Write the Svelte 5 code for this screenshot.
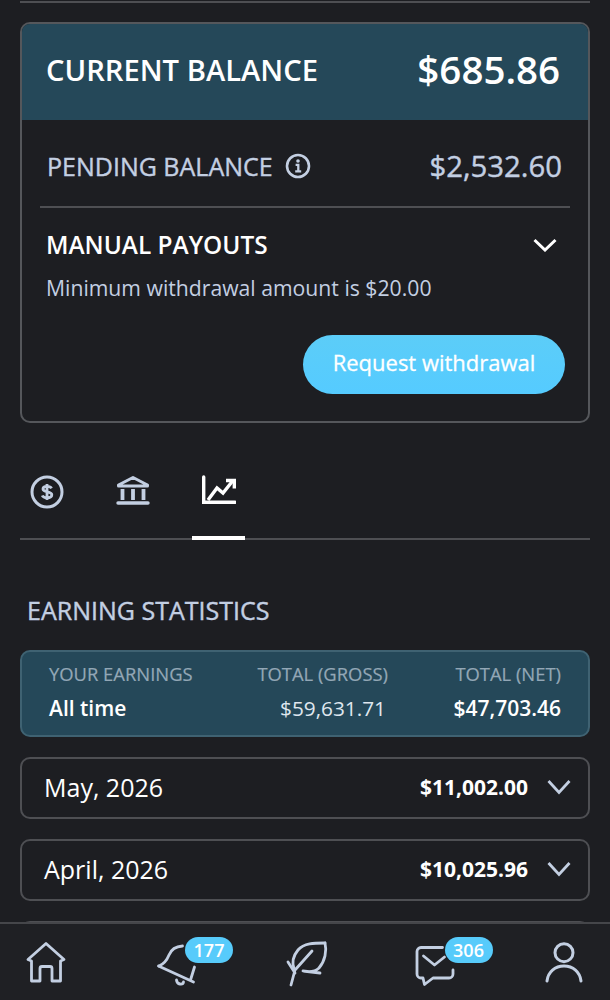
<script>
  const months = [
    { label: 'May, 2026', amount: '$11,002.00' },
    { label: 'April, 2026', amount: '$10,025.96' },
    { label: 'March, 2026', amount: '$9,412.30' }
  ];
</script>

<div class="page">
  <main class="content">
    <div class="top-rule"></div>

    <section class="balance-card">
      <header class="current">
        <span class="current-label">CURRENT BALANCE</span>
        <span class="current-value">$685.86</span>
      </header>
      <div class="pending">
        <span class="pending-label">
          PENDING BALANCE
          <svg class="info" viewBox="0 0 26 26" fill="none" stroke="currentColor">
            <circle cx="13" cy="13" r="11" stroke-width="2.600" />
            <circle cx="13" cy="8" r="1.800" fill="currentColor" stroke="none" />
            <path d="M10.600 11.800h2.700v6.200M10.200 18.300h6" stroke-width="2.300" />
          </svg>
        </span>
        <span class="pending-value">$2,532.60</span>
      </div>
      <div class="manual">
        <div class="manual-head">
          <span class="manual-title">MANUAL PAYOUTS</span>
          <svg class="manual-chev" viewBox="0 0 24 14" fill="none" stroke="currentColor" stroke-width="3">
            <path d="M1.500 2 12 12 22.500 2" />
          </svg>
        </div>
        <p class="minimum">Minimum withdrawal amount is $20.00</p>
        <div class="actions">
          <button class="withdraw">Request withdrawal</button>
        </div>
      </div>
    </section>

    <nav class="tabs">
      <div class="tab">
        <svg viewBox="0 0 34 34" fill="none" stroke="currentColor" width="34" height="34">
          <circle cx="17" cy="17" r="15" stroke-width="3" />
          <path d="M21.500 13.300c-.6-1.300-2.200-2-4.500-2-2.500 0-4 1.100-4 2.800 0 3.800 8.800 1.800 8.800 5.700 0 1.800-1.800 3-4.800 3-2.400 0-4.100-.8-4.800-2.300M17 9v16" stroke-width="2.800" />
        </svg>
      </div>
      <div class="tab">
        <svg viewBox="0 0 34 30" fill="none" stroke="currentColor" width="34" height="30">
          <path d="M2.500 10 17 2.500 31.500 10v1H2.500z" stroke-width="3" stroke-linejoin="round" />
          <path d="M6.500 14v11M17 14v11M27.500 14v11" stroke-width="3.800" />
          <path d="M2 28h30" stroke-width="3.400" stroke-linecap="round" />
        </svg>
      </div>
      <div class="tab active">
        <svg viewBox="0 0 34 30" fill="none" stroke="currentColor" stroke-width="3.400" width="34" height="30">
          <path d="M1.700 2v25.300H33" stroke-linecap="round" />
          <path d="M6 25 15 13l6 5L31 5.500" />
          <path d="M24 5.500h8.300V13.500" />
        </svg>
        <span class="underline"></span>
      </div>
    </nav>

    <h2 class="section-title">EARNING STATISTICS</h2>

    <section class="summary">
      <div class="col">
        <span class="col-head">YOUR EARNINGS</span>
        <strong class="col-main">All time</strong>
      </div>
      <div class="col right">
        <span class="col-head">TOTAL (GROSS)</span>
        <span class="col-plain">$59,631.71</span>
      </div>
      <div class="col right">
        <span class="col-head">TOTAL (NET)</span>
        <strong class="col-main">$47,703.46</strong>
      </div>
    </section>

    <ul class="months">
      {#each months as m}
        <li class="month">
          <span class="month-label">{m.label}</span>
          <span class="month-side">
            <strong class="month-amount">{m.amount}</strong>
            <svg class="month-chev" viewBox="0 0 24 16" fill="none" stroke="currentColor" stroke-width="2.800">
              <path d="M1.500 2 12 13.500 22.500 2" />
            </svg>
          </span>
        </li>
      {/each}
    </ul>
  </main>

  <footer class="bottom-nav">
    <div class="nav-item">
      <svg viewBox="0 0 42 44" fill="none" stroke="currentColor" stroke-width="2.800" stroke-linejoin="round" stroke-linecap="round">
        <path d="M21 2.500 3 18.500l3.500 1.500v20H15V27.500a2 2 0 0 1 2-2h8a2 2 0 0 1 2 2V40h8.500V20l3.500-1.500z" />
      </svg>
    </div>
    <div class="nav-item">
      <svg viewBox="0 0 42 44" fill="none" stroke="currentColor" stroke-width="2.800" stroke-linecap="round" stroke-linejoin="round">
        <path d="M3.500 25 38.500 41" />
        <path d="M4 25c5-2 8-6 10-11 2-5 6-8.500 13.500-9" />
        <path d="M39.500 26 35.500 39" />
        <path d="M21.500 39c.5 5 6.500 5 7 2" />
      </svg>
      <span class="badge bell-badge">177</span>
    </div>
    <div class="nav-item">
      <svg viewBox="0 0 42 44" fill="none" stroke="currentColor" stroke-width="2.800" stroke-linecap="round" stroke-linejoin="round">
        <path d="M41 2C30 2 20 2 14 9 9 15 8 22 10 28" />
        <path d="M41 2c2 8 0 18-6 25-4 4-11 4-16 3l17 2" />
        <path d="M7 44 11 29 28 10" />
        <path d="M4 21 11 32" />
      </svg>
    </div>
    <div class="nav-item">
      <svg viewBox="0 0 42 44" fill="none" stroke="currentColor" stroke-width="2.800" stroke-linecap="round" stroke-linejoin="round">
        <path d="M28.500 6.500H7a4 4 0 0 0-4 4V33a4 4 0 0 0 4 4h2l1.500 6.500L19 37h16a4 4 0 0 0 4-4v-4" />
        <path d="M9.500 15l11 9 10-8" />
      </svg>
      <span class="badge mail-badge">306</span>
    </div>
    <div class="nav-item">
      <svg viewBox="0 0 42 44" fill="none" stroke="currentColor" stroke-width="3" stroke-linecap="round">
        <circle cx="21" cy="11.700" r="9" />
        <path d="M4 40c1-9 8-15 17-15s16 6 17 15" />
      </svg>
    </div>
  </footer>
</div>

<style>
  :global(body) {
    margin: 0;
    background: #1d1e22;
  }
  .page {
    position: relative;
    width: 610px;
    height: 1000px;
    overflow: hidden;
    background: #1d1e22;
    font-family: "Open Sans", "Noto Sans", sans-serif;
    color: #fff;
  }
  .content {
    padding: 1px 20px 0;
    display: flex;
    flex-direction: column;
  }
  .top-rule {
    height: 2px;
    background: #4e4f53;
  }
  .balance-card {
    margin-top: 19px;
    border: 2px solid #55575b;
    border-radius: 10px;
    overflow: hidden;
    height: 401px;
    box-sizing: border-box;
  }
  .current {
    height: 97px;
    background: #254859;
    display: flex;
    align-items: center;
    justify-content: space-between;
    padding: 0 28px 0 24px;
    margin-top: -1px;
    box-sizing: border-box;
  }
  .current-label {
    font-size: 29.200px;
    font-weight: 600;
    margin-top: -4px;
  }
  .current-value {
    font-size: 38.500px;
    font-weight: 600;
    margin-top: -6px;
  }
  .pending {
    margin: 0 18px;
    padding: 5px 8px 0 7px;
    box-sizing: content-box;
    height: 81px;
    border-bottom: 2px solid #4e4f53;
    display: flex;
    align-items: center;
    justify-content: space-between;
    color: #c3cfe2;
  }
  .pending-label {
    font-size: 25px;
    font-weight: 400;
    -webkit-text-stroke: 0.4px currentColor;
    display: flex;
    align-items: center;
    gap: 12px;
  }
  .info {
    width: 26px;
    height: 26px;
  }
  .pending-value {
    font-size: 29.300px;
    font-weight: 400;
    -webkit-text-stroke: 0.4px currentColor;
  }
  .manual {
    padding: 0 24px;
  }
  .manual-head {
    display: flex;
    align-items: center;
    justify-content: space-between;
    margin-top: 19px;
    padding-right: 7px;
  }
  .manual-title {
    font-size: 24.400px;
    font-weight: 600;
    line-height: 36px;
  }
  .manual-chev {
    width: 24px;
    height: 14px;
  }
  .minimum {
    margin: 9px 0 0;
    font-size: 21.200px;
    line-height: 32px;
    color: #c3cfe2;
  }
  .actions {
    display: flex;
    justify-content: flex-end;
    margin-top: 31px;
    margin-right: -1px;
  }
  .withdraw {
    width: 262px;
    height: 59px;
    border: 0;
    border-radius: 30px;
    background: linear-gradient(180deg, #5ccdf8, #55cbff);
    color: #fff;
    font-family: inherit;
    font-size: 22px;
    -webkit-text-stroke: 0.3px #fff;
    padding: 0 0 5px;
  }
  .tabs {
    display: flex;
    height: 117px;
    box-sizing: border-box;
    border-bottom: 2px solid #4e4f53;
    color: #c3cfe2;
  }
  .tab {
    position: relative;
    width: 53px;
    display: flex;
    justify-content: center;
    margin-right: 33px;
    padding-top: 52px;
    box-sizing: border-box;
  }
  .tab svg {
    display: block;
  }
  .tab.active {
    color: #fff;
  }
  .underline {
    position: absolute;
    left: 0;
    right: 0;
    bottom: -2px;
    height: 4px;
    background: #fff;
  }
  .section-title {
    margin: 51px 0 0 7px;
    font-size: 25px;
    font-weight: 400;
    -webkit-text-stroke: 0.4px currentColor;
    line-height: 38px;
    color: #c3cfe2;
  }
  .summary {
    margin-top: 21px;
    height: 87px;
    box-sizing: border-box;
    background: #254859;
    border: 2px solid #3f6272;
    border-radius: 10px;
    display: grid;
    grid-template-columns: 1fr auto 173px;
    padding: 9px 27px 0 27px;
  }
  .col {
    display: flex;
    flex-direction: column;
    gap: 7px;
  }
  .col.right {
    align-items: flex-end;
  }
  .col-head {
    font-size: 18.400px;
    line-height: 26px;
    color: #93a7b6;
    -webkit-text-stroke: 0.2px currentColor;
  }
  .col-main {
    font-size: 21px;
    font-weight: 600;
    line-height: 28px;
  }
  .col-plain {
    font-size: 20.800px;
    line-height: 28px;
    color: #dfe6ee;
    margin-right: 2px;
  }
  .months {
    list-style: none;
    margin: 20px 0 0;
    padding: 0;
    display: flex;
    flex-direction: column;
    gap: 20px;
  }
  .month {
    height: 62px;
    box-sizing: border-box;
    border: 2px solid #4e4f53;
    border-radius: 10px;
    display: flex;
    align-items: center;
    justify-content: space-between;
    padding: 0 17px 2px 22px;
  }
  .month-label {
    font-size: 25px;
  }
  .month-side {
    display: flex;
    align-items: center;
    gap: 19px;
  }
  .month-amount {
    font-size: 21px;
    font-weight: 700;
  }
  .month-chev {
    width: 24px;
    height: 16px;
    color: #c3cfe2;
  }
  .bottom-nav {
    position: absolute;
    left: 0;
    right: 0;
    bottom: 0;
    height: 78px;
    box-sizing: border-box;
    background: #1f2024;
    border-top: 2px solid #45464a;
    display: flex;
    justify-content: space-between;
    padding: 17px 25px 0;
    color: #c3cfe2;
  }
  .nav-item {
    position: relative;
    width: 42px;
    height: 44px;
  }
  .nav-item svg {
    display: block;
    width: 42px;
    height: 44px;
    overflow: visible;
  }
  .badge {
    position: absolute;
    top: -4px;
    width: 48px;
    height: 26px;
    border-radius: 13px;
    background: #57cbfb;
    color: #fff;
    font-size: 18px;
    font-weight: 600;
    line-height: 26px;
    text-align: center;
  }
  .bell-badge {
    left: 30.500px;
  }
  .mail-badge {
    left: 31px;
  }
</style>
